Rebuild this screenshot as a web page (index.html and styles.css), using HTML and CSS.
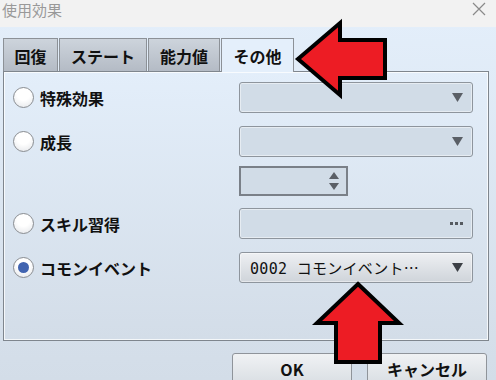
FILE: index.html
```html
<!DOCTYPE html>
<html lang="ja">
<head>
<meta charset="utf-8">
<link rel="stylesheet" href="styles.css">
</head>
<body>
<div class="window">
  <div class="titlebar">
    <span class="title">使用効果</span>
    <svg class="close" width="14" height="14" viewBox="0 0 14 14"><path d="M1 1L13 13M13 1L1 13" stroke="#8a8a8a" stroke-width="1.2" fill="none"/></svg>
  </div>
  <div class="content">
    <div class="tabs">
      <div class="tab t1">回復</div>
      <div class="tab t2">ステート</div>
      <div class="tab t3">能力値</div>
      <div class="tab active t4">その他</div>
    </div>
    <div class="panel">
      <div class="row">
        <label class="opt"><span class="radio"></span>特殊効果</label>
        <div class="combo"><svg class="caret" width="11" height="9" viewBox="0 0 11 9"><polygon points="0,0 11,0 5.5,9" fill="#5a5f66"/></svg></div>
      </div>
      <div class="row r2">
        <label class="opt"><span class="radio"></span>成長</label>
        <div class="combo"><svg class="caret" width="11" height="9" viewBox="0 0 11 9"><polygon points="0,0 11,0 5.5,9" fill="#5a5f66"/></svg></div>
      </div>
      <div class="row r3">
        <span></span>
        <div class="spin">
          <svg width="10" height="20" viewBox="0 0 10 20"><polygon points="5,1 10,8 0,8" fill="#5a5f66"/><polygon points="0,12 10,12 5,19" fill="#5a5f66"/></svg>
        </div>
      </div>
      <div class="row r4">
        <label class="opt"><span class="radio"></span>スキル習得</label>
        <div class="combo"><span class="dots"><i></i><i></i><i></i></span></div>
      </div>
      <div class="row r5">
        <label class="opt"><span class="radio checked"></span>コモンイベント</label>
        <div class="combo button"><span class="val">0002 コモンイベント<span class="ell">…</span></span><svg class="caret" width="11" height="9" viewBox="0 0 11 9"><polygon points="0,0 11,0 5.5,9" fill="#3c4046"/></svg></div>
      </div>
    </div>
    <div class="buttons">
      <div class="btn">OK</div>
      <div class="btn">キャンセル</div>
    </div>
  </div>
  <svg class="arrows" width="496" height="380" viewBox="0 0 496 380">
    <polygon points="298,59 340,23 340,40 385,40 385,78 340,78 340,95" fill="#ed1c24" stroke="#000" stroke-width="4" stroke-linejoin="miter"/>
    <polygon points="358,284 399,323 380,323 380,362 336,362 336,323 317,323" fill="#ed1c24" stroke="#000" stroke-width="4" stroke-linejoin="miter"/>
  </svg>
</div>
</body>
</html>
```
FILE: styles.css
```css
html, body {
  margin: 0;
  padding: 0;
}
body {
  width: 496px;
  height: 380px;
  overflow: hidden;
  font-family: "Noto Sans CJK JP", "Noto Sans", sans-serif;
  color: #111;
}
.window {
  position: relative;
  width: 496px;
  height: 380px;
  background: linear-gradient(#e4effb 0%, #d3dde8 100%);
}
.titlebar {
  height: 27px;
  background: #f2f2f2;
  display: flex;
  align-items: center;
  justify-content: space-between;
  padding: 0 10px 0 2px;
  box-sizing: border-box;
}
.title {
  font-size: 15px;
  color: #999;
  line-height: 20px;
  margin-top: -8px;
}
.close {
  margin-top: -10px;
}
.content {
  padding: 11px 7px 0 3px;
}
.tabs {
  display: flex;
  height: 33px;
  gap: 1px;
}
.tab {
  box-sizing: border-box;
  height: 33px;
  border: 1px solid #8c9197;
  border-bottom: none;
  background: linear-gradient(#cdd4dc, #b4bbc5);
  font-size: 16px;
  font-weight: 700;
  display: flex;
  align-items: center;
  justify-content: center;
  padding-top: 1px;
}
.t1 { width: 55px; }
.t2 { width: 88px; }
.t3 { width: 72px; }
.t4 { width: 73px; }
.tab.active {
  background: #e4effb;
  position: relative;
  z-index: 1;
  height: 34px;
  margin-bottom: -1px;
}
.panel {
  box-sizing: border-box;
  width: 486px;
  height: 270px;
  border: 1px solid #7f868e;
  box-shadow: inset 0 0 0 1px rgba(255,255,255,0.75);
  padding: 10px 15px 0 9px;
  background: linear-gradient(#e3eefa, #d3dde8);
}
.row {
  display: grid;
  grid-template-columns: 1fr 234px;
  align-items: center;
  height: 31px;
}
.r2 { margin-top: 13px; }
.r3 { margin-top: 9px; height: 30px; }
.r4 { margin-top: 12px; }
.r5 { margin-top: 13px; }
.opt {
  display: flex;
  align-items: center;
  gap: 6px;
  font-size: 16px;
  font-weight: 700;
}
.radio {
  box-sizing: border-box;
  width: 21px;
  height: 21px;
  border-radius: 50%;
  border: 1px solid #8a8d91;
  background: radial-gradient(circle at 50% 30%, #ffffff 40%, #e2e4e8 100%);
  display: flex;
  align-items: center;
  justify-content: center;
}
.radio.checked::after {
  content: "";
  width: 11px;
  height: 11px;
  border-radius: 50%;
  background: #4164b0;
}
.combo {
  box-sizing: border-box;
  height: 31px;
  border: 1px solid #8e959d;
  border-radius: 3px;
  background: #d1dce7;
  box-shadow: inset 0 0 0 1px rgba(255,255,255,0.45);
  display: flex;
  align-items: center;
  justify-content: flex-end;
  padding-right: 9px;
}
.dots {
  display: flex;
  gap: 2px;
}
.dots i {
  width: 3px;
  height: 3px;
  background: #555a60;
}
.combo.button {
  background: linear-gradient(#eef0f3, #cfd4da);
  justify-content: space-between;
  padding-left: 10px;
}
.val {
  font-family: "DejaVu Sans Mono", "Noto Sans CJK JP", monospace;
  font-size: 15px;
  color: #111;
  letter-spacing: 0.3px;
}
.ell {
  font-family: "Noto Sans CJK JP", sans-serif;
  letter-spacing: 0;
}
.spin {
  box-sizing: border-box;
  width: 109px;
  height: 30px;
  border: 2px solid #7a8088;
  background: #d1dce7;
  display: flex;
  justify-content: flex-end;
  align-items: center;
  padding-right: 7px;
}
.buttons {
  display: flex;
  justify-content: flex-end;
  gap: 15px;
  margin-top: 12px;
  padding-right: 2px;
}
.btn {
  box-sizing: border-box;
  width: 120px;
  height: 32px;
  border: 1px solid #8f949a;
  border-radius: 3px;
  background: linear-gradient(#f0f2f4, #d9dee3);
  display: flex;
  justify-content: center;
  align-items: flex-start;
  padding-top: 3px;
  font-size: 16px;
  font-weight: 700;
}
.arrows {
  position: absolute;
  left: 0;
  top: 0;
  pointer-events: none;
}
```
